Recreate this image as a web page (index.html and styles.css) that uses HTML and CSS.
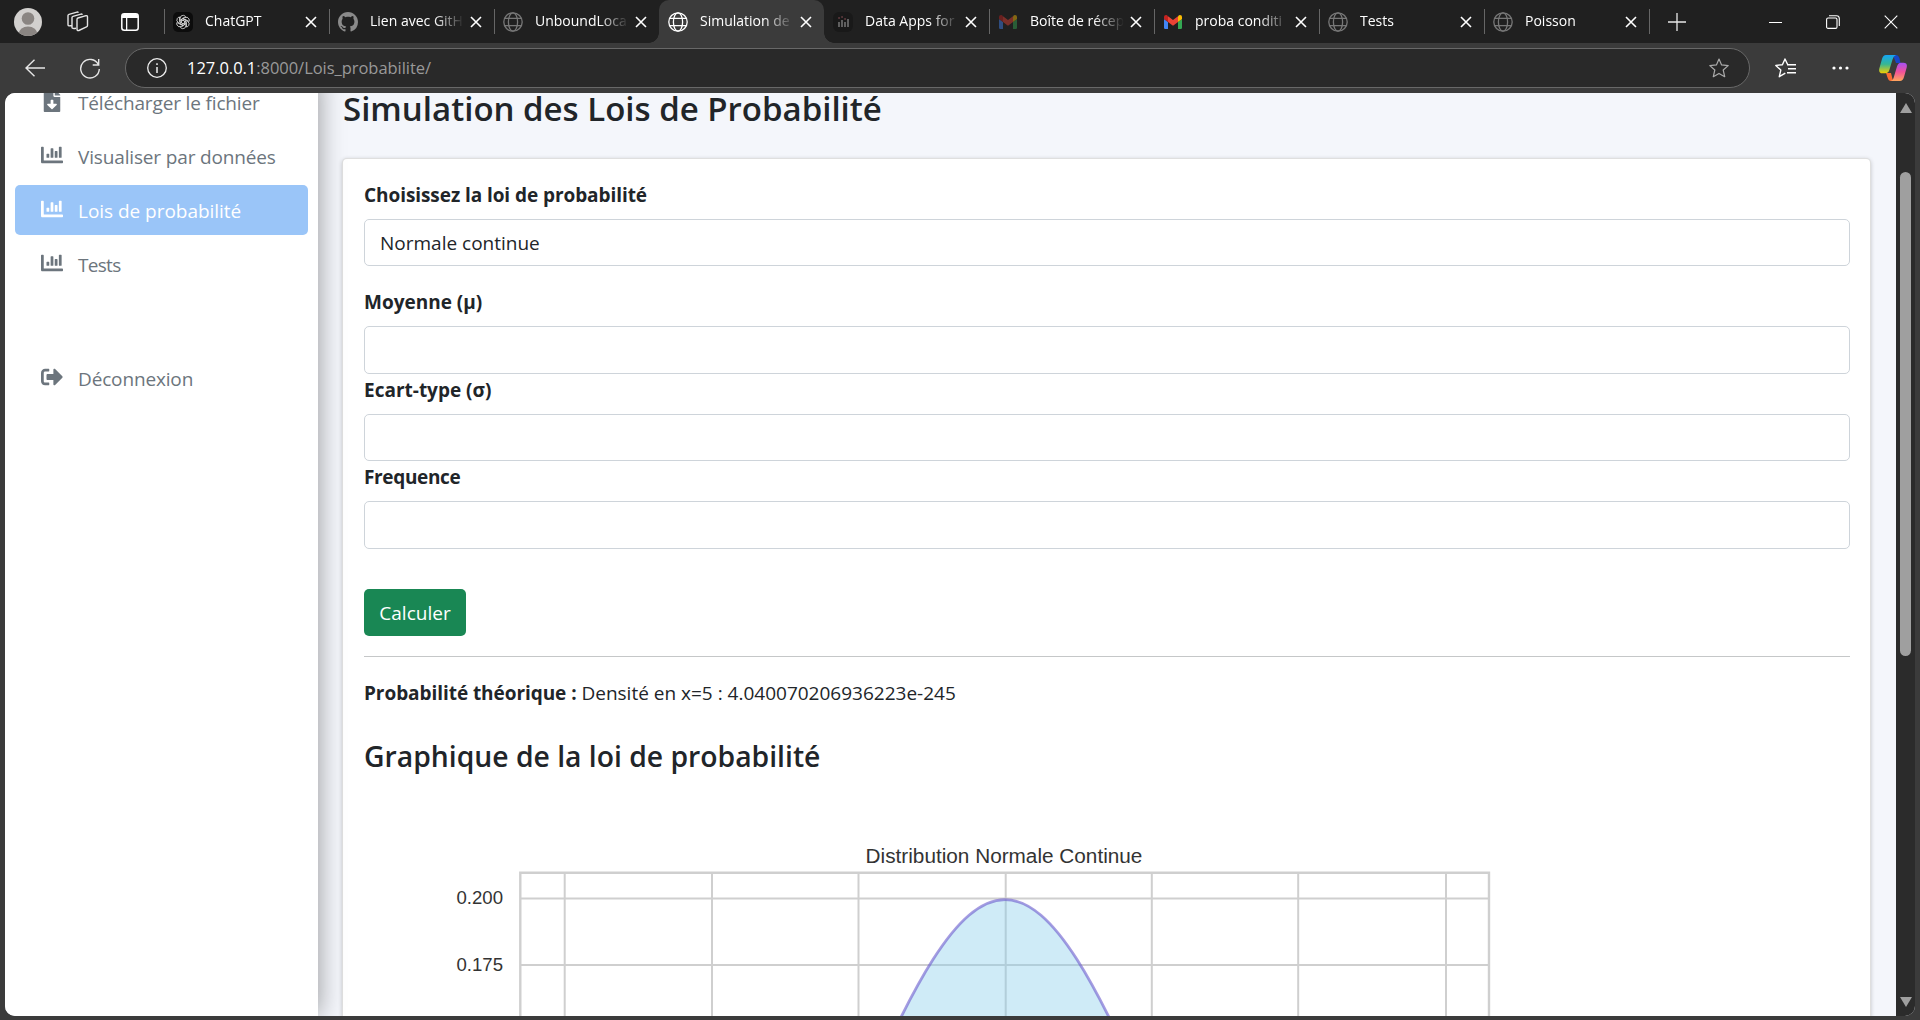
FILE: index.html
```html
<!DOCTYPE html>
<html lang="fr">
<head>
<meta charset="utf-8">
<title>Simulation des Lois de Probabilité</title>
<link rel="stylesheet" href="styles.css">
</head>
<body>
<svg class="defs" width="0" height="0">
  <symbol id="globe" viewBox="0 0 20 20"><g fill="none" stroke="currentColor" stroke-width="1.3"><circle cx="10" cy="10" r="9.2"/><ellipse cx="10" cy="10" rx="4.6" ry="9.2"/><path d="M1.8 6.3h16.4M1.8 13.7h16.4"/></g></symbol>
  <symbol id="close" viewBox="0 0 12 12"><path d="M1 1l10 10M11 1L1 11" stroke="currentColor" stroke-width="1.6" fill="none"/></symbol>
  <symbol id="gmail" viewBox="0 0 18 14"><path fill="#4285f4" d="M0 4l4 3v7H1.2Q0 14 0 12.8z"/><path fill="#34a853" d="M18 4l-4 3v7h2.8q1.2 0 1.2-1.2z"/><path fill="#ea4335" d="M4 1.3L9 5l5-3.7V7L9 10.700 4 7z"/><path fill="#c5221f" d="M0 2Q0 0 2 0 3 0 4 1.300V7L0 4z"/><path fill="#fbbc04" d="M18 2Q18 0 16 0 15 0 14 1.300V7l4-3z"/></symbol>
  <symbol id="chart" viewBox="0 0 512 512"><path fill="currentColor" d="M332.800 320h38.400c6.400 0 12.800-6.400 12.800-12.800V172.800c0-6.400-6.400-12.800-12.800-12.800h-38.400c-6.400 0-12.800 6.400-12.800 12.800v134.400c0 6.400 6.400 12.800 12.800 12.800zm96 0h38.400c6.400 0 12.800-6.400 12.800-12.800V76.800c0-6.400-6.400-12.800-12.800-12.800h-38.400c-6.400 0-12.800 6.400-12.800 12.800v230.400c0 6.400 6.400 12.800 12.800 12.800zm-288 0h38.400c6.400 0 12.800-6.400 12.800-12.800v-70.400c0-6.400-6.400-12.800-12.800-12.800h-38.400c-6.400 0-12.800 6.400-12.800 12.800v70.400c0 6.400 6.400 12.800 12.800 12.800zm96 0h38.400c6.400 0 12.800-6.400 12.800-12.800V108.800c0-6.400-6.400-12.800-12.800-12.800h-38.400c-6.400 0-12.800 6.400-12.800 12.800v198.400c0 6.400 6.400 12.800 12.800 12.800zM496 384H64V80c0-8.840-7.160-16-16-16H16C7.160 64 0 71.160 0 80v336c0 17.670 14.330 32 32 32h464c8.840 0 16-7.160 16-16v-32c0-8.840-7.160-16-16-16z"/></symbol>
</svg>
<div class="browser">
  <div class="tabstrip">
    <div class="launchers">
      <svg class="avatar" width="28" height="28" viewBox="0 0 28 28"><defs><clipPath id="av"><circle cx="14" cy="14" r="14"/></clipPath></defs><g clip-path="url(#av)"><rect width="28" height="28" fill="#d2d0ce"/><circle cx="14" cy="10.500" r="6.300" fill="#8a8582"/><ellipse cx="14" cy="26.500" rx="9.500" ry="8" fill="#8a8582"/></g></svg>
      <svg class="workspaces" width="22" height="22" viewBox="0 0 22 22" fill="none" stroke="#e4e4e4" stroke-width="1.400" stroke-linejoin="round"><path d="M10 8.500q0-1.200 1-1.500l8-2.300q1.500-.3 1.500 1.200v8.600q0 1-1 1.400L11.800 19.500q-1.800.4-1.800-1.200z"/><path d="M9 17.300q-4 .7-4-.9V6.600q0-1 1-1.300l8-2.200q1-.2 1.300.8M4.700 14.500Q1 15.500 1 13.700V4.600q0-1 1-1.300L10 1.100q1-.2 1.300.7"/></svg>
      <svg class="vtabs" width="18" height="18" viewBox="0 0 18 18"><rect x=".8" y=".8" width="16.400" height="16.400" rx="2.500" fill="none" stroke="#fff" stroke-width="1.500"/><path d="M1 5V3q0-2 2-2h12q2 0 2 2v2zM5 5h1.300v12H5z" fill="#fff"/></svg>
    </div>
    <div class="tab"><span class="fav gpt"><svg width="16" height="16" viewBox="0 0 16 16" fill="none" stroke="#ddd" stroke-width=".8"><path id="leaf" d="M5.200 9.700V4.300q0-3 3-3 1.500 0 2.400 1.200L6.500 5v4"/><use href="#leaf" transform="rotate(60 8 8)"/><use href="#leaf" transform="rotate(120 8 8)"/><use href="#leaf" transform="rotate(180 8 8)"/><use href="#leaf" transform="rotate(240 8 8)"/><use href="#leaf" transform="rotate(300 8 8)"/></svg></span><span class="title">ChatGPT</span><svg class="x"><use href="#close"/></svg></div>
    <div class="tab"><span class="fav"><svg width="20" height="20" viewBox="0 0 16 16"><path fill="#8a8a8a" d="M8 0C3.580 0 0 3.580 0 8c0 3.540 2.290 6.530 5.470 7.590.4.070.55-.17.55-.38 0-.19-.01-.82-.01-1.490-2.010.37-2.530-.49-2.690-.94-.09-.23-.48-.94-.82-1.130-.28-.15-.68-.52-.01-.53.63-.01 1.080.58 1.230.82.72 1.210 1.870.87 2.330.66.070-.52.28-.87.51-1.070-1.780-.2-3.640-.89-3.640-3.950 0-.87.31-1.590.82-2.150-.08-.2-.36-1.020.08-2.120 0 0 .67-.21 2.200.82.64-.18 1.320-.27 2-.27s1.360.09 2 .27c1.530-1.040 2.200-.82 2.200-.82.44 1.100.16 1.920.08 2.120.51.56.82 1.270.82 2.150 0 3.070-1.870 3.750-3.650 3.950.29.25.54.73.54 1.480 0 1.070-.01 1.930-.01 2.200 0 .21.15.46.55.38A8.010 8.010 0 0016 8c0-4.420-3.580-8-8-8z"/></svg></span><span class="title">Lien avec GitH</span><svg class="x"><use href="#close"/></svg></div>
    <div class="tab"><svg class="fav grey"><use href="#globe"/></svg><span class="title">UnboundLoca</span><svg class="x"><use href="#close"/></svg></div>
    <div class="tab active"><svg class="fav"><use href="#globe"/></svg><span class="title">Simulation de</span><svg class="x"><use href="#close"/></svg></div>
    <div class="tab"><span class="fav"><svg width="20" height="20" viewBox="0 0 20 20"><rect width="20" height="20" rx="6" fill="#191919"/><path d="M6 10v5M9 8v7M12 10v5M15 7v8" stroke="#777" stroke-width="1.500"/><path d="M5.300 6h1.500M8.300 5h1.500M11.300 7h1.500" stroke="#75454a" stroke-width="1.500"/></svg></span><span class="title">Data Apps for</span><svg class="x"><use href="#close"/></svg></div>
    <div class="tab"><svg class="fav mail faded"><use href="#gmail"/></svg><span class="title">Boîte de récep</span><svg class="x"><use href="#close"/></svg></div>
    <div class="tab"><svg class="fav mail"><use href="#gmail"/></svg><span class="title">proba conditi</span><svg class="x"><use href="#close"/></svg></div>
    <div class="tab"><svg class="fav grey"><use href="#globe"/></svg><span class="title">Tests</span><svg class="x"><use href="#close"/></svg></div>
    <div class="tab last"><svg class="fav grey"><use href="#globe"/></svg><span class="title">Poisson</span><svg class="x"><use href="#close"/></svg></div>
    <svg class="newtab" width="18" height="18" viewBox="0 0 18 18"><path d="M9 0v18M0 9h18" stroke="#e8e8e8" stroke-width="1.300"/></svg>
    <div class="winctl">
      <svg width="13" height="14" viewBox="0 0 13 14"><path d="M0 7.500h13" stroke="#fff"/></svg>
      <svg width="14" height="14" viewBox="0 0 14 14" fill="none" stroke="#fff" stroke-width="1.100"><rect x=".6" y="3" width="10.400" height="10.400" rx="1.500"/><path d="M3 .8h7.500q2.800 0 2.800 2.800V11"/></svg>
      <svg width="14" height="14" viewBox="0 0 14 14"><path d="M.7.7l12.600 12.600M13.300.7L.7 13.300" stroke="#fff" stroke-width="1.100"/></svg>
    </div>
  </div>
  <div class="toolbar">
    <svg class="back" width="20" height="18" viewBox="0 0 20 18"><path d="M9.500.7L1 9l8.500 8.300M1 9h19" fill="none" stroke="#e6e6e6" stroke-width="1.400"/></svg>
    <svg class="reload" width="20" height="21" viewBox="0 0 20 21"><path d="M18.300 6.500A9.300 9.300 0 1 0 19.300 11M18.700 1v6h-6" fill="none" stroke="#e6e6e6" stroke-width="1.400"/></svg>
    <div class="omnibox">
      <svg width="20" height="20" viewBox="0 0 20 20"><circle cx="10" cy="10" r="9.300" fill="none" stroke="#eee" stroke-width="1.300"/><path d="M10 9v6M10 5.300v1.700" stroke="#eee" stroke-width="1.500"/></svg>
      <span class="url"><b>127.0.0.1</b>:8000/Lois_probabilite/</span>
      <svg width="20" height="20" viewBox="0 0 20 20"><path d="M10 1l2.600 5.900 6.600.7-5 4.400 1.500 6.700L10 15.400l-5.700 3.300L5.800 12l-5-4.400 6.600-.7z" fill="none" stroke="#aaa" stroke-width="1.200" stroke-linejoin="round"/></svg>
    </div>
    <svg class="favs" width="21" height="20" viewBox="0 0 21 20"><path d="M12.500 6.300L10 1 7.400 6.700l-6.600.7 5 4.700-1.500 6.600 6-3.500M12 6.700h9M13 10.700h8M12 14.700h9" fill="none" stroke="#fff" stroke-width="1.400" stroke-linejoin="round"/></svg>
    <svg class="dots" width="17" height="4" viewBox="0 0 17 4" fill="#fff"><circle cx="2" cy="2" r="1.600"/><circle cx="8.500" cy="2" r="1.600"/><circle cx="15" cy="2" r="1.600"/></svg>
    <svg class="copilot" width="28" height="26" viewBox="0 0 28 26"><defs><linearGradient id="ca" x2="0" y2="1"><stop stop-color="#15a5f5"/><stop offset=".5" stop-color="#36b694"/><stop offset="1" stop-color="#f4cf00"/></linearGradient><linearGradient id="cb" x2="0" y2="1"><stop stop-color="#a450f5"/><stop offset=".5" stop-color="#f1519a"/><stop offset="1" stop-color="#ffa65c"/></linearGradient></defs><path fill="#1746c8" d="M14 0h3q2.500 0 3.500 3.500L21.500 8H17z"/><path fill="#fb6b32" d="M7 18h5l2 8h-2q-2.500 0-3.500-3.500z"/><path fill="url(#ca)" d="M7 0h10q-2.500.8-3.500 4.500l-3 10q-1 3.800-4 3.800H3.500Q-.7 18.300.3 13.500L3 4Q4.100 0 7 0z"/><path fill="url(#cb)" d="M21 26H11.500q2.700-.8 3.500-4.500l3-10q1-3.800 4-3.800h2.500q4.200 0 3.200 4.800L25 22q-1.100 4-4 4z"/></svg>
  </div>
  <div class="viewport">
    <nav class="sidebar">
      <a class="item"><svg width="22" height="22" viewBox="-64 0 512 512"><path fill="currentColor" d="M224 136V0H24C10.700 0 0 10.700 0 24v464c0 13.300 10.700 24 24 24h336c13.300 0 24-10.700 24-24V160H248c-13.200 0-24-10.800-24-24zm76.450 211.360l-96.420 95.700c-6.650 6.610-17.390 6.610-24.040 0l-96.420-95.700C73.420 337.290 80.540 320 94.820 320H160v-80c0-8.840 7.160-16 16-16h32c8.840 0 16 7.160 16 16v80h65.180c14.280 0 21.400 17.290 11.270 27.360zM377 105L279.100 7c-4.500-4.500-10.600-7-17-7H256v128h128v-6.100c0-6.300-2.500-12.400-7-16.900z"/></svg><span>Télécharger le fichier</span></a>
      <a class="item"><svg width="22" height="22"><use href="#chart"/></svg><span>Visualiser par données</span></a>
      <a class="item selected"><svg width="22" height="22"><use href="#chart"/></svg><span>Lois de probabilité</span></a>
      <a class="item tests"><svg width="22" height="22"><use href="#chart"/></svg><span>Tests</span></a>
      <a class="item logout"><svg width="22" height="22" viewBox="0 0 512 512"><path fill="currentColor" d="M497 273L329 441c-15 15-41 4.500-41-17v-96H152c-13.300 0-24-10.700-24-24v-96c0-13.300 10.700-24 24-24h136V88c0-21.400 25.900-32 41-17l168 168c9.300 9.400 9.300 24.600 0 34zM192 436v-40c0-6.600-5.400-12-12-12H96c-17.700 0-32-14.300-32-32V160c0-17.700 14.300-32 32-32h84c6.600 0 12-5.400 12-12V76c0-6.600-5.400-12-12-12H96c-53 0-96 43-96 96v192c0 53 43 96 96 96h84c6.600 0 12-5.400 12-12z"/></svg><span>Déconnexion</span></a>
    </nav>
    <main class="content">
      <h3>Simulation des Lois de Probabilité</h3>
      <section class="card">
        <label class="tight">Choisissez la loi de probabilité</label>
        <div class="field select">Normale continue</div>
        <label class="gap">Moyenne (μ)</label>
        <div class="field tall"></div>
        <label>Ecart-type (σ)</label>
        <div class="field"></div>
        <label class="tighter">Frequence</label>
        <div class="field tall"></div>
        <button class="btn">Calculer</button>
        <hr>
        <p><strong>Probabilité théorique :</strong> Densité en x=5 : 4.040070206936223e-245</p>
        <h4>Graphique de la loi de probabilité</h4>
        <svg class="plot" width="1486" height="240" viewBox="364 790 1486 240">
          <g fill="none" stroke="#cfcfcf" stroke-width="2"><path d="M564.700 873v160M712 873v160M858.500 873v160M1005.700 873v160M1151.800 873v160M1298.200 873v160M1446 873v160M520 898.500h969M520 965h969"/><path d="M520.300 1040V872.700H1489V1040" stroke-width="2.400"/></g>
          <path d="M885 1050.100L897 1025.200C909 1000.900 921 978.400 933 959.600 945 940.800 957 925.600 969 915.300 981 905 993 899.600 1005 899.600 1017 899.600 1029 905 1041 915.300 1053 925.600 1065 940.800 1077 959.600 1089 978.400 1101 1000.900 1113 1025.200L1125 1050.100" fill="#87ceeb" fill-opacity=".4" stroke="#6a5acd" stroke-opacity=".6" stroke-width="2.800"/>
          <text class="plot-title" x="1004" y="862.500">Distribution Normale Continue</text>
          <text class="tick" x="503" y="904">0.200</text>
          <text class="tick" x="503" y="970.500">0.175</text>
        </svg>
      </section>
    </main>
    <div class="scrollbar"><i class="up"></i><i class="thumb"></i><i class="down"></i></div>
  </div>
</div>
</body>
</html>
```
FILE: styles.css
```css
* { box-sizing: border-box; }
body { margin: 0; font-family: "Open Sans", "Noto Sans", sans-serif; background: #3b3b3b; overflow: hidden; }
.defs { display: block; position: absolute; }
.browser { width: 1920px; height: 1020px; overflow: hidden; display: flex; flex-direction: column; background: #3b3b3b; }

.tabstrip { height: 43px; flex: none; background: #202020; display: flex; align-items: center; color: #fff; }
.launchers { width: 164px; flex: none; display: flex; align-items: center; padding-left: 14px; }
.workspaces { margin-left: 25px; }
.vtabs { margin-left: 32px; }
.tab { width: 165px; height: 43px; flex: none; display: flex; align-items: center; padding-left: 8px; position: relative; }
.tab::before { content: ""; position: absolute; left: 0; top: 9px; width: 1px; height: 25px; background: #666; }
.tab.last::after { content: ""; position: absolute; right: -1px; top: 9px; width: 1px; height: 25px; background: #666; }
.tab.active { background: #3b3b3b; border-radius: 10px 10px 0 0; }
.tab.active::before { left: -10px; top: 33px; width: 10px; height: 10px; background: radial-gradient(circle at 0 0, transparent 9.5px, #3b3b3b 10px); }
.tab.active::after { content: ""; position: absolute; right: -10px; top: 33px; width: 10px; height: 10px; background: radial-gradient(circle at 100% 0, transparent 9.5px, #3b3b3b 10px); }
.tab.active + .tab::before { display: none; }
.fav { width: 20px; height: 20px; flex: none; display: block; margin: 1px 0 0 1px; }
.fav svg { display: block; }
.gpt { background: #0c0c0c; border-radius: 5px; padding: 2px; }
.grey { color: #777; }
.mail { width: 18px; height: 14px; margin: 1px 1px 0 2px; }
.faded { opacity: .45; }
.title { width: 94px; margin: 0 0 2px 12px; font-size: 14px; line-height: 20px; white-space: nowrap; -webkit-mask: linear-gradient(to right, #000 64px, transparent 94px); mask: linear-gradient(to right, #000 64px, transparent 94px); }
.x { width: 12px; height: 12px; margin: 1px 0 0 6px; flex: none; }
.newtab { margin-left: 19px; flex: none; }
.winctl { margin-left: auto; display: flex; gap: 44px; padding-right: 22px; }

.toolbar { height: 50px; flex: none; display: flex; align-items: center; padding-left: 25px; }
.reload { margin-left: 35px; }
.omnibox { width: 1625px; height: 40px; margin-left: 25px; border: 1px solid #686868; border-radius: 20px; background: #292929; display: flex; align-items: center; padding: 0 20px 0 21px; }
.url { flex: 1; margin: 0 0 2px 20px; font-size: 16.5px; letter-spacing: -.04px; color: #999; }
.url b { font-weight: 400; color: #fff; }
.favs { margin-left: 25px; }
.dots { margin-left: 36px; }
.copilot { margin-left: 30px; }

.viewport { width: 1910px; height: 923px; margin-left: 5px; border-radius: 10px; overflow: hidden; display: flex; background: #f4f6fb; color: #212529; }
.sidebar { width: 313px; flex: none; background: #fff; display: flex; flex-direction: column; gap: 4px; padding: 0 10px; margin-top: -16px; box-shadow: 0 0 25px rgba(0,0,0,.4); position: relative; z-index: 1; }
.item { height: 50px; flex: none; display: flex; align-items: center; padding: 1px 0 0 26px; color: #6c757d; font-size: 19px; letter-spacing: -.15px; border-radius: 5px; white-space: nowrap; }
.item svg { margin: 0 15px 3px 0; }
.selected { background: #9ac5f8; color: #fff; letter-spacing: -.03px; }
.tests { letter-spacing: -.7px; }
.logout { margin-top: 60px; }

.content { width: 1578px; flex: none; padding: 0 25px 0 24px; }
h3, h4 { font-weight: 600; margin: 0; white-space: nowrap; }
h3 { font-size: 33px; line-height: 42px; height: 66px; margin-top: -5px; padding-left: 1px; }
.card { height: 1100px; margin-top: 4px; background: #fff; border: 1px solid rgba(0,0,0,.125); border-radius: 5px; padding: 20px 20px 20px 21px; box-shadow: 0 1px 4px rgba(0,0,0,.2); font-size: 19px; display: flex; flex-direction: column; }
label { display: block; height: 40px; line-height: 30px; padding-top: 1px; font-weight: 700; flex: none; }
.tight { letter-spacing: -.07px; }
.tighter { letter-spacing: -.35px; }
.field { height: 47px; flex: none; border: 1px solid #ced4da; border-radius: 5px; padding: 0 15px; line-height: 46px; }
.tall { height: 48px; }
.gap { margin-top: 20px; }
.btn { align-self: flex-start; margin: 40px 0 0; width: 102px; height: 47px; flex: none; border: 0; border-radius: 5px; background: #198754; color: #fff; font: 19px "Open Sans", sans-serif; padding: 0; }
hr { margin: 20px 0 0; height: 1px; border: 0; background: #c5c7c8; flex: none; width: 100%; }
p { margin: 21px 0 0; line-height: 30px; height: 30px; flex: none; }
strong { letter-spacing: -.06px; }
h4 { margin-top: 30px; font-size: 28.300px; line-height: 36px; height: 36px; }
.plot { display: block; flex: none; margin-top: 16px; font-family: "Liberation Sans", Arial, sans-serif; fill: #333; }
.plot-title { font-size: 20.750px; text-anchor: middle; }
.tick { font-size: 18.600px; text-anchor: end; }

.scrollbar { flex: 1; background: #2b2b2b; display: flex; flex-direction: column; align-items: center; }
.up, .down { width: 0; height: 0; border: 6px solid transparent; flex: none; }
.up { border-top: 0; border-bottom: 10px solid #9f9f9f; margin-top: 10px; }
.thumb { width: 11px; height: 484px; margin-top: 59px; border-radius: 6px; background: #9f9f9f; flex: none; }
.down { border-bottom: 0; border-top: 10px solid #9f9f9f; margin: auto 0 9px; }
```
